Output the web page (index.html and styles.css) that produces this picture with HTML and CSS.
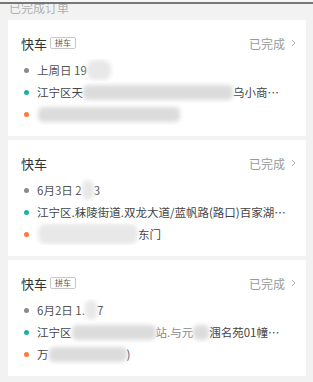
FILE: index.html
```html
<!DOCTYPE html>
<html lang="zh-CN">
<head>
<meta charset="utf-8">
<link rel="stylesheet" href="styles.css">
</head>
<body>
<div class="topline"></div>
<div class="header">已完成订单</div>

<div class="card">
  <div class="head">
    <div class="title">快车<span class="tag">拼车</span></div>
    <div class="status">已完成<svg class="chev" width="5" height="8" viewBox="0 0 5 8"><path d="M1 1l3 3-3 3" fill="none" stroke="#aaa" stroke-width="1"/></svg></div>
  </div>
  <div class="row"><span class="dot gray"></span><span class="txt date">上周日 19</span><span class="blur w24 soft"></span></div>
  <div class="row"><span class="dot teal"></span><span class="txt">江宁区天</span><span class="blur w150"></span><span class="txt">乌小商…</span></div>
  <div class="row"><span class="dot orange"></span><span class="blur w142 first"></span></div>
</div>

<div class="card">
  <div class="head">
    <div class="title">快车</div>
    <div class="status">已完成<svg class="chev" width="5" height="8" viewBox="0 0 5 8"><path d="M1 1l3 3-3 3" fill="none" stroke="#aaa" stroke-width="1"/></svg></div>
  </div>
  <div class="row"><span class="dot gray"></span><span class="txt date">6月3日 2</span><span class="blur w12 soft"></span><span class="txt date">3</span></div>
  <div class="row"><span class="dot teal"></span><span class="txt">江宁区.秣陵街道.双龙大道/蓝帆路(路口)百家湖…</span></div>
  <div class="row"><span class="dot orange"></span><span class="blur w100 first soft"></span><span class="txt">东门</span></div>
</div>

<div class="card">
  <div class="head">
    <div class="title">快车<span class="tag">拼车</span></div>
    <div class="status">已完成<svg class="chev" width="5" height="8" viewBox="0 0 5 8"><path d="M1 1l3 3-3 3" fill="none" stroke="#aaa" stroke-width="1"/></svg></div>
  </div>
  <div class="row"><span class="dot gray"></span><span class="txt date">6月2日 1.</span><span class="blur w12 soft"></span><span class="txt date">7</span></div>
  <div class="row"><span class="dot teal"></span><span class="txt">江宁区</span><span class="blur w84"></span><span class="txt faint">站.与元</span><span class="blur w16"></span><span class="txt">涠名苑01幢…</span></div>
  <div class="row"><span class="dot orange"></span><span class="txt">万</span><span class="blur w78"></span><span class="txt">)</span></div>
</div>
</body>
</html>
```

FILE: styles.css
```css
* { box-sizing: border-box; }
html, body { margin: 0; padding: 0; }
body {
  width: 313px;
  height: 382px;
  overflow: hidden;
  background: #f2f2f2;
  font-family: "Noto Sans CJK SC", "Noto Sans", sans-serif;
  position: relative;
}
.topline {
  position: absolute;
  left: 0; top: 0;
  width: 313px;
  height: 4px;
  background: #f6f6f6;
  border-bottom: 2px solid #777;
}
.header {
  height: 22px;
  padding: 0 9px;
  margin-top: -2px;
  font-size: 12px;
  line-height: 20px;
  color: #b0b0b0;
}
.card {
  margin: 0 7px 4px 8px;
  background: #fff;
  height: 116px;
  padding: 14px 10px 11px 13px;
}
.head {
  display: flex;
  justify-content: space-between;
  align-items: center;
  height: 18px;
  margin-bottom: 7px;
}
.title {
  display: flex;
  align-items: center;
  font-size: 13px;
  color: #333;
}
.tag {
  margin-left: 3px;
  font-size: 8px;
  line-height: 10px;
  padding: 0 4px;
  border: 1px solid #c8c8c8;
  border-radius: 2px;
  color: #555;
}
.status {
  display: flex;
  align-items: center;
  font-size: 12px;
  color: #9a9a9a;
}
.chev { margin-left: 6px; }
.row {
  display: flex;
  align-items: center;
  height: 22px;
  font-size: 11.5px;
  color: #444;
  white-space: nowrap;
  overflow: hidden;
}
.dot {
  flex: none;
  width: 5px;
  height: 5px;
  border-radius: 50%;
  margin: 0 8px 0 3px;
}
.dot.gray { background: #8a8a8a; }
.dot.teal { background: #1fb09c; }
.dot.orange { background: #ff7b3a; }
.txt { flex: none; }
.txt.date { color: #555; }
.txt.faint { color: #888; }
.blur {
  flex: none;
  display: inline-block;
  height: 15px;
  background: #dcdcdc;
  border-radius: 5px;
  filter: blur(2px);
}
.blur.soft { background: #e8e8e8; height: 20px; border-radius: 8px; }
.blur.first { margin-left: 1px; }
.w12 { width: 12px; }
.w16 { width: 16px; }
.w24 { width: 24px; }
.w78 { width: 78px; }
.w84 { width: 84px; }
.w100 { width: 100px; }
.w142 { width: 142px; }
.w150 { width: 150px; }
```
